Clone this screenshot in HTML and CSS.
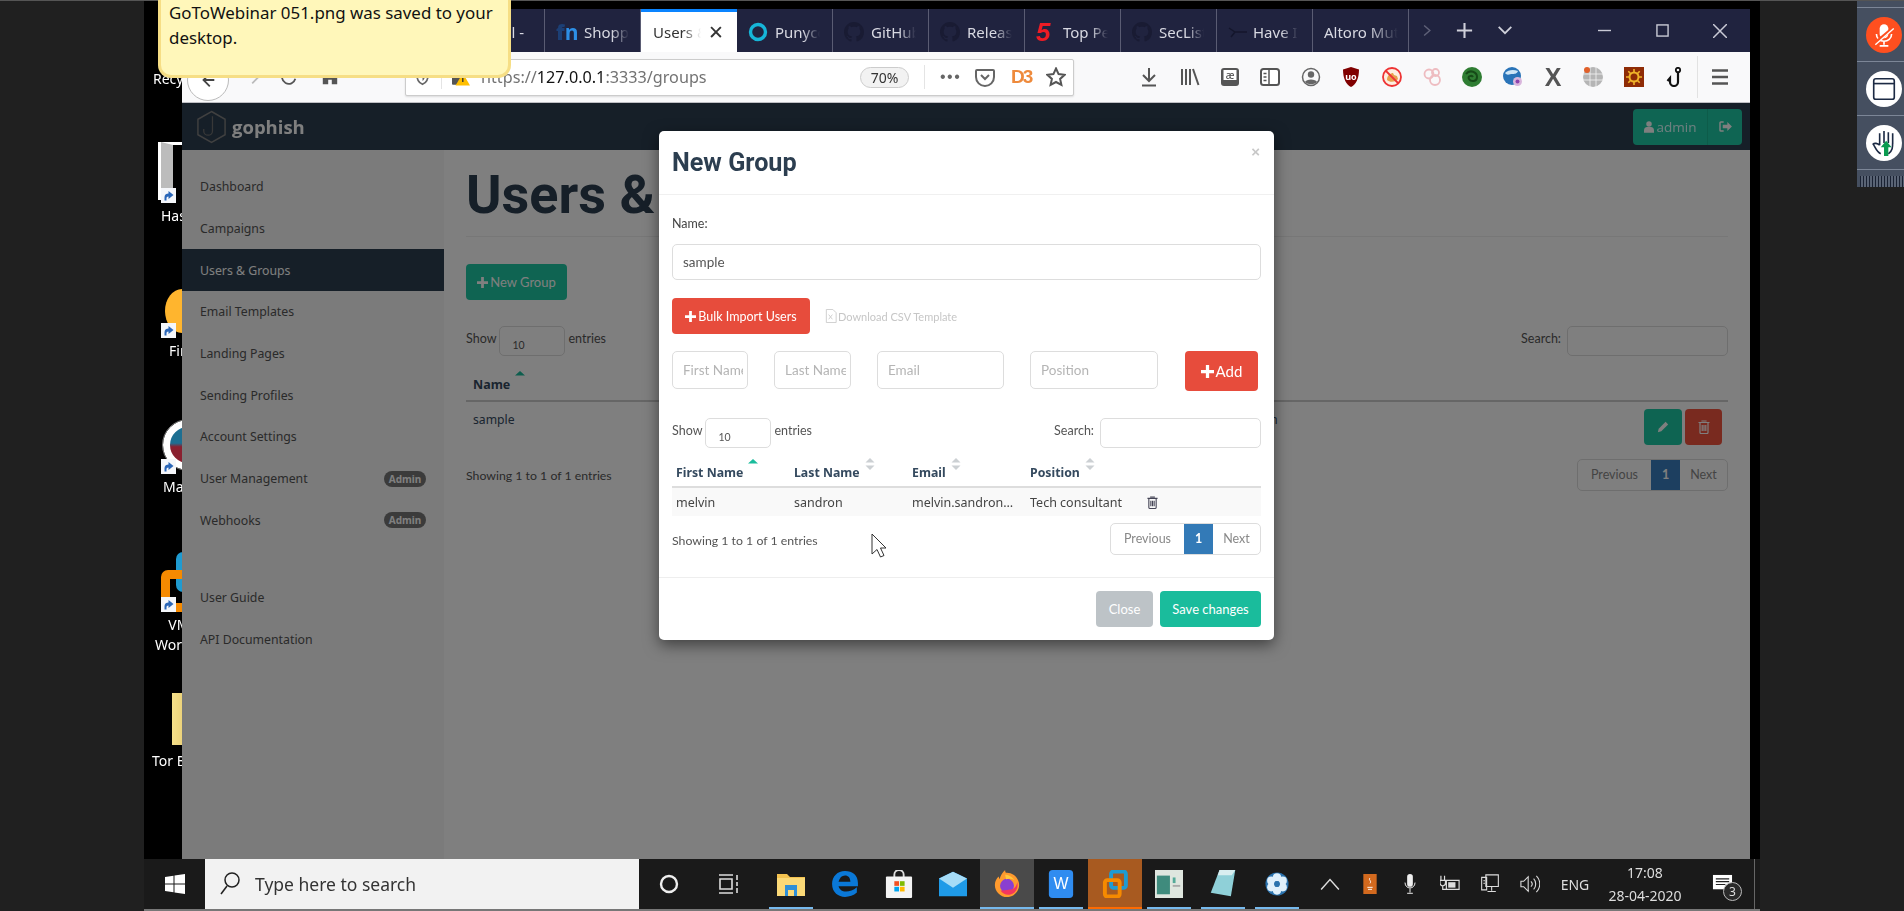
FILE: index.html
```html
<!DOCTYPE html>
<html lang="en">
<head>
<meta charset="utf-8">
<title>Users &amp; Groups - Gophish</title>
<link rel="stylesheet" href="styles.css">
</head>
<body>
<svg class="defs" width="0" height="0" aria-hidden="true">
  <symbol id="gh" viewBox="0 0 16 16"><path d="M8 0C3.58 0 0 3.58 0 8c0 3.54 2.29 6.53 5.47 7.59.4.07.55-.17.55-.38 0-.19-.01-.82-.01-1.49-2.01.37-2.53-.49-2.69-.94-.09-.23-.48-.94-.82-1.13-.28-.15-.68-.52-.01-.53.63-.01 1.08.58 1.23.82.72 1.21 1.87.87 2.33.66.07-.52.28-.87.51-1.07-1.78-.2-3.64-.89-3.64-3.95 0-.87.31-1.59.82-2.15-.08-.2-.36-1.02.08-2.12 0 0 .67-.21 2.2.82.64-.18 1.32-.27 2-.27.68 0 1.36.09 2 .27 1.53-1.04 2.2-.82 2.2-.82.44 1.1.16 1.92.08 2.12.51.56.82 1.27.82 2.15 0 3.07-1.87 3.75-3.65 3.95.29.25.54.73.54 1.48 0 1.07-.01 1.93-.01 2.2 0 .21.15.46.55.38A8.013 8.013 0 0016 8c0-4.42-3.58-8-8-8z"/></symbol>
  <symbol id="plus" viewBox="0 0 12 12"><path d="M4.5 0h3v4.5H12v3H7.5V12h-3V7.5H0v-3h4.5z"/></symbol>
  <symbol id="trash" viewBox="0 0 12 14"><path d="M4 1.500V1h4v.5M.5 2.500h11M2 3v9.500a1 1 0 0 0 1 1h6a1 1 0 0 0 1-1V3M4.200 5v6M6 5v6M7.800 5v6" fill="none" stroke="currentColor" stroke-width="1.200"/></symbol>
  <symbol id="sort" viewBox="0 0 10 12"><path d="M5 0l4.500 4.500H.5z" fill="#ccd0d3"/><path d="M5 12L.5 7.500h9z" fill="#ccd0d3"/></symbol>
  <symbol id="sortup" viewBox="0 0 10 12"><path d="M5 1l5 4.500H0z" fill="#1abc9c"/></symbol>
  <symbol id="sc" viewBox="0 0 15 15"><rect width="15" height="15" fill="#f4f6fa"/><path d="M3.500 12.500V9c0-2.500 2-3.500 4-3.500V3l5 4-5 4V8.500c-1.500 0-2 .8-2 2v2z" fill="#2a66b8"/></symbol>
</svg>

<div class="root">
  <div class="gutter-left"></div>

  <div class="screen">
    <div class="desk">
      <div class="desk-icon i-recycle"><span class="desk-label">Recycle</span></div>
      <div class="desk-icon i-hash"><span class="hash-art"></span><svg class="sc-badge"><use href="#sc"/></svg><span class="desk-label">Hashcat</span></div>
      <div class="desk-icon i-fire"><span class="fire-art"></span><svg class="sc-badge"><use href="#sc"/></svg><span class="desk-label">Firefox</span></div>
      <div class="desk-icon i-mal"><span class="mal-art"></span><svg class="sc-badge"><use href="#sc"/></svg><span class="desk-label">Maltego</span></div>
      <div class="desk-icon i-vm"><span class="vm-blue"></span><span class="vm-art"></span><svg class="sc-badge"><use href="#sc"/></svg><span class="desk-label">VMware<br>Workstation</span></div>
      <div class="desk-icon i-tor"><span class="tor-art"></span><span class="desk-label">Tor Browser</span></div>

      <div class="browser">
        <div class="tabs">
          <div class="tab first"><span class="tab-text">Gmail -</span></div>
          <div class="tab"><span class="fav-in"><b>f</b>n</span><span class="tab-text">Shopping</span></div>
          <div class="tab active"><span class="tab-text">Users &amp; Groups</span><span class="tab-x">✕</span></div>
          <div class="tab"><svg class="fav" viewBox="0 0 20 20"><circle cx="10" cy="10" r="7.500" fill="none" stroke="#16b5d8" stroke-width="3.400"/></svg><span class="tab-text">Punycode</span></div>
          <div class="tab"><svg class="fav gh"><use href="#gh"/></svg><span class="tab-text">GitHub</span></div>
          <div class="tab"><svg class="fav gh"><use href="#gh"/></svg><span class="tab-text">Releases</span></div>
          <div class="tab"><span class="fav-five">5</span><span class="tab-text">Top Pentest</span></div>
          <div class="tab"><svg class="fav gh"><use href="#gh"/></svg><span class="tab-text">SecLists</span></div>
          <div class="tab have"><svg class="fav" viewBox="0 0 20 20"><path d="M1 6l6 4h12M7 10l-4 5" fill="none" stroke="#14162c" stroke-width="1.500"/></svg><span class="tab-text">Have I Been</span></div>
          <div class="tab"><span class="tab-text wide">Altoro Mutual</span></div>
          <div class="tab-ctl more"><svg viewBox="0 0 14 20"><path d="M3 3l8 7-8 7" fill="none" stroke="#5f6178" stroke-width="2"/></svg></div>
          <div class="tab-ctl plus"><svg viewBox="0 0 20 20"><path d="M10 2v16M2 10h16" stroke="#cfd0da" stroke-width="2.200"/></svg></div>
          <div class="tab-ctl down"><svg viewBox="0 0 20 14"><path d="M3 3l7 7 7-7" fill="none" stroke="#cfd0da" stroke-width="2"/></svg></div>
          <div class="win-ctl min"><svg viewBox="0 0 14 14"><path d="M0 7h14" stroke="#c9cad6" stroke-width="1.500"/></svg></div>
          <div class="win-ctl max"><svg viewBox="0 0 14 14"><rect x="1" y="1" width="12" height="12" fill="none" stroke="#c9cad6" stroke-width="1.500"/></svg></div>
          <div class="win-ctl cls"><svg viewBox="0 0 14 14"><path d="M0 0l14 14M14 0L0 14" stroke="#c9cad6" stroke-width="1.500"/></svg></div>
        </div>

        <div class="toolbar">
          <div class="back"><svg viewBox="0 0 20 20"><path d="M12 3l-7 7 7 7M5 10h12" fill="none" stroke="#444" stroke-width="2"/></svg></div>
          <svg class="nav-ic fwd" viewBox="0 0 20 20"><path d="M8 3l7 7-7 7M15 10H3" fill="none" stroke="#bbb" stroke-width="2"/></svg>
          <svg class="nav-ic reload" viewBox="0 0 20 20"><path d="M16 6a7.500 7.500 0 1 0 1 6" fill="none" stroke="#555" stroke-width="2"/><path d="M17 2v6h-6z" fill="#555"/></svg>
          <svg class="nav-ic home" viewBox="0 0 20 20"><path d="M10 2L2 9v9h6v-5h4v5h6V9z" fill="#555"/></svg>
          <div class="urlbar">
            <svg class="url-ic" viewBox="0 0 20 20"><path d="M10 2l7 2c0 7-2 12-7 14C5 16 3 11 3 4z" fill="none" stroke="#666" stroke-width="2"/><path d="M10 6l3 1c0 3-1 6-3 7z" fill="#666"/></svg>
            <span class="url-sep"></span>
            <svg class="url-lock" viewBox="0 0 20 18"><rect x="0" y="6" width="11" height="11" rx="1" fill="#555"/><path d="M12 4l8 14H4z" fill="#ffbf00"/><path d="M12 9v5" stroke="#333" stroke-width="1.500"/></svg>
            <span class="url"><span class="dim">https://</span>127.0.0.1<span class="dim">:3333/groups</span></span>
            <span class="zoom-pill">70%</span>
            <span class="url-sep right"></span>
            <span class="dots">•••</span>
            <svg class="url-tool" viewBox="0 0 20 20"><path d="M2 3h16a1 1 0 0 1 1 1v6a9 9 0 0 1-18 0V4a1 1 0 0 1 1-1z" fill="none" stroke="#666" stroke-width="2"/><path d="M6 8l4 4 4-4" fill="none" stroke="#666" stroke-width="2"/></svg>
            <span class="d3">D3</span>
            <svg class="url-tool" viewBox="0 0 20 20"><path d="M10 1.500l2.600 5.600 6 .7-4.500 4.100 1.300 6L10 15l-5.400 2.900 1.300-6L1.400 7.800l6-.7z" fill="none" stroke="#555" stroke-width="2"/></svg>
          </div>
          <div class="tools">
            <div class="tool"><svg viewBox="0 0 20 20"><path d="M10 1v13M4 8l6 6 6-6M3 18.500h14" fill="none" stroke="#555" stroke-width="2"/></svg></div>
            <div class="tool"><svg viewBox="0 0 20 20"><path d="M2 2v16M6 2v16M10 2v16M13 2l5.500 16" fill="none" stroke="#555" stroke-width="2"/></svg></div>
            <div class="tool"><svg viewBox="0 0 20 20"><rect x="1" y="1" width="18" height="18" rx="3" fill="#555"/><rect x="3.500" y="3" width="13" height="10" fill="#fff"/><text x="10" y="11.500" text-anchor="middle" class="svg-ae">æ</text></svg></div>
            <div class="tool"><svg viewBox="0 0 20 20"><rect x="1" y="2" width="18" height="16" rx="2.500" fill="#fff" stroke="#555" stroke-width="2"/><path d="M9 2v16M3.500 6.500h3M3.500 10h3M3.500 13.500h3" stroke="#555" stroke-width="1.500"/></svg></div>
            <div class="tool"><svg viewBox="0 0 20 20"><circle cx="10" cy="10" r="8.500" fill="none" stroke="#666" stroke-width="1.500"/><circle cx="10" cy="7.500" r="3.200" fill="#666"/><path d="M4 15c1-3.500 11-3.500 12 0-3 3-9 3-12 0z" fill="#666"/></svg></div>
            <div class="tool"><svg viewBox="0 0 20 20"><path d="M10 0l8 2.500c0 9-3 15-8 17.500C5 17.500 2 11.500 2 2.500z" fill="#800000"/><text x="10" y="12.500" text-anchor="middle" class="svg-ub">uo</text></svg></div>
            <div class="tool"><svg viewBox="0 0 20 20"><circle cx="10" cy="10" r="9" fill="#fdeee0"/><path d="M5 13c0-5 4-7 6-7l1 2 3 1 1 3c-2 3-8 4-11 1z" fill="#e8a04c"/><circle cx="10" cy="10" r="9" fill="none" stroke="#e33" stroke-width="1.800"/><path d="M3.500 3.500l13 13" stroke="#e33" stroke-width="1.800"/></svg></div>
            <div class="tool"><svg viewBox="0 0 20 20"><g fill="none" stroke="#eebcc0" stroke-width="1.800"><circle cx="7" cy="7" r="4.500"/><circle cx="13.500" cy="5.500" r="3.500"/><circle cx="13" cy="13" r="5"/></g></svg></div>
            <div class="tool"><svg viewBox="0 0 20 20"><circle cx="10" cy="10" r="10" fill="#2f7d32"/><path d="M4 7c4-5 11-2 11 3s-6 5-8 2 3-4 4-2" fill="none" stroke="#164a18" stroke-width="2"/></svg></div>
            <div class="tool"><svg viewBox="0 0 20 20"><circle cx="9" cy="9" r="9" fill="#2a74b8"/><path d="M2 6c3-3 8-4 13-2-1 3-4 3-6 3S4 9 2 6z" fill="#cfe6f6"/><circle cx="14.500" cy="14.500" r="4.500" fill="#d9b6dc"/><circle cx="14.500" cy="14.500" r="2" fill="#8e44ad"/></svg></div>
            <div class="tool"><span class="x-logo">X</span></div>
            <div class="tool"><svg viewBox="0 0 20 20"><circle cx="10" cy="10" r="10" fill="#b5b5b5"/><path d="M0 7h20M0 13h20M7 0v20M13 0v20" stroke="#f5f5f5" stroke-width=".8"/><circle cx="4" cy="3" r="3" fill="#e0602a"/></svg></div>
            <div class="tool"><svg viewBox="0 0 20 20"><rect width="20" height="20" fill="#8f2c06"/><circle cx="10" cy="10" r="4.500" fill="none" stroke="#f0b429" stroke-width="2"/><path d="M10 2v3M10 15v3M2 10h3M15 10h3M4.300 4.300l2.200 2.200M13.500 13.500l2.200 2.200M15.700 4.300l-2.200 2.200M6.500 13.500l-2.200 2.200" stroke="#f0b429" stroke-width="1.600"/></svg></div>
            <div class="tool"><svg viewBox="0 0 20 20"><circle cx="14" cy="3" r="2.200" fill="none" stroke="#111" stroke-width="1.800"/><path d="M14 5v10a4 4 0 0 1-8 0v-4l-2.500 3" fill="none" stroke="#111" stroke-width="2.200"/></svg></div>
            <span class="tools-sep"></span>
            <div class="tool burger"><svg viewBox="0 0 20 20"><path d="M2 3.500h16M2 10h16M2 16.500h16" stroke="#555" stroke-width="2.400"/></svg></div>
          </div>
        </div>

        <div class="page">
          <header class="navbar">
            <svg class="logo" viewBox="0 0 32 34"><path d="M16 1l14 8v16l-14 8-14-8V9z" fill="none" stroke="#808080" stroke-width="1.500"/><path d="M17 6v15a4.500 4.500 0 0 1-9 0v-2" fill="none" stroke="#707070" stroke-width="1.300"/></svg>
            <span class="brand">gophish</span>
            <div class="user-btn"><span class="user-name"><svg class="u-ic" viewBox="0 0 12 14"><circle cx="6" cy="3.500" r="3.300"/><path d="M0 14v-3c0-3 2-4 3.500-4h5c1.500 0 3.500 1 3.500 4v3z"/></svg>admin</span><span class="user-out"><svg class="out-ic" viewBox="0 0 14 12"><path d="M5 1H2a1 1 0 0 0-1 1v8a1 1 0 0 0 1 1h3" fill="none" stroke="currentColor" stroke-width="1.600"/><path d="M4 4h5V1l5 5-5 5V8H4z"/></svg></span></div>
          </header>
          <div class="page-body">
            <nav class="sidebar">
              <a class="nav-item">Dashboard</a>
              <a class="nav-item">Campaigns</a>
              <a class="nav-item on">Users &amp; Groups</a>
              <a class="nav-item">Email Templates</a>
              <a class="nav-item">Landing Pages</a>
              <a class="nav-item">Sending Profiles</a>
              <a class="nav-item">Account Settings</a>
              <a class="nav-item">User Management<span class="pill">Admin</span></a>
              <a class="nav-item">Webhooks<span class="pill">Admin</span></a>
              <a class="nav-item docs">User Guide</a>
              <a class="nav-item">API Documentation</a>
            </nav>
            <main class="main">
              <h1 class="page-title">Users &amp; Groups</h1>
              <hr class="rule">
              <button class="btn btn-new"><svg class="btn-plus"><use href="#plus"/></svg>New Group</button>
              <div class="dt-top main-top">
                <div class="dt-len">Show<span class="len-box">10</span>entries</div>
                <div class="dt-search">Search:<span class="search-box"></span></div>
              </div>
              <table class="bg-table">
                <thead><tr><th class="c-name">Name<svg class="sort"><use href="#sortup"/></svg></th><th class="c-date">Modified Date</th><th></th></tr></thead>
                <tbody><tr><td>sample</td><td>April 28th 2020, 5:07:31 pm</td><td class="acts"><span class="act edit"><svg viewBox="0 0 14 14"><path d="M10 1l3 3-8 8-4 1 1-4z"/></svg></span><span class="act del"><svg><use href="#trash"/></svg></span></td></tr></tbody>
              </table>
              <div class="dt-foot">
                <span>Showing 1 to 1 of 1 entries</span>
                <div class="pager bg-pager"><span class="pg">Previous</span><span class="pg cur">1</span><span class="pg">Next</span></div>
              </div>
            </main>
          </div>
          <div class="backdrop"></div>

          <section class="modal">
            <div class="modal-head"><h2 class="modal-title">New Group</h2><span class="modal-x">×</span></div>
            <div class="modal-body">
              <label class="field-label">Name:</label>
              <div class="input name-input">sample</div>
              <div class="bulk-row">
                <button class="btn btn-red bulk"><svg class="btn-plus"><use href="#plus"/></svg>Bulk Import Users</button>
                <span class="csv"><svg class="csv-ic" viewBox="0 0 12 15"><path d="M1 .5h7l3.500 3.500v10.500H1z" fill="none" stroke="#ccc"/><path d="M3.500 6l4 5M7.500 6l-4 5" stroke="#ccc"/></svg>Download CSV Template</span>
              </div>
              <div class="user-row">
                <div class="input ph f1"><span>First Name</span></div>
                <div class="input ph f2"><span>Last Name</span></div>
                <div class="input ph f3"><span>Email</span></div>
                <div class="input ph f4"><span>Position</span></div>
                <button class="btn btn-red add"><svg class="btn-plus big"><use href="#plus"/></svg>Add</button>
              </div>
              <div class="dt-top">
                <div class="dt-len">Show<span class="len-box">10</span>entries</div>
                <div class="dt-search">Search:<span class="search-box s2"></span></div>
              </div>
              <table class="m-table">
                <thead><tr>
                  <th>First Name<svg class="sort"><use href="#sortup"/></svg></th>
                  <th>Last Name<svg class="sort"><use href="#sort"/></svg></th>
                  <th>Email<svg class="sort"><use href="#sort"/></svg></th>
                  <th>Position<svg class="sort"><use href="#sort"/></svg></th>
                  <th></th>
                </tr></thead>
                <tbody><tr><td>melvin</td><td>sandron</td><td>melvin.sandron@example.com</td><td>Tech consultant</td><td><svg class="m-trash"><use href="#trash"/></svg></td></tr></tbody>
              </table>
              <div class="dt-foot m-foot">
                <span class="foot-note">Showing 1 to 1 of 1 entries</span>
                <div class="pager"><span class="pg">Previous</span><span class="pg cur">1</span><span class="pg">Next</span></div>
              </div>
            </div>
            <div class="modal-foot">
              <button class="btn btn-close">Close</button>
              <button class="btn btn-save">Save changes</button>
            </div>
          </section>
          <svg class="pointer" viewBox="0 0 16 25"><path d="M1 1v20l5-4.500 3.500 7.500 3.500-1.500-3.500-7.500H15z" fill="#fff" stroke="#333" stroke-width="1"/></svg>
        </div>
      </div>

      <div class="toast">GoToWebinar 051.png was saved to your desktop.</div>
    </div>

    <footer class="taskbar">
      <div class="start"><svg viewBox="0 0 20 20"><path d="M0 3l8.500-1.200v7.700H0zM9.500 1.600L20 0v9.500H9.500zM0 10.500h8.500v7.700L0 17zM9.500 10.500H20V20L9.500 18.400z" fill="#fff"/></svg></div>
      <div class="searchbox"><svg viewBox="0 0 20 24"><circle cx="12" cy="8" r="7" fill="none" stroke="#222" stroke-width="1.500"/><path d="M7 14l-6 8" stroke="#222" stroke-width="1.500"/></svg><span>Type here to search</span></div>
      <div class="tb-sys"><svg viewBox="0 0 20 20"><circle cx="10" cy="10" r="8" fill="none" stroke="#eee" stroke-width="2.400"/></svg></div>
      <div class="tb-sys"><svg viewBox="0 0 20 20"><path d="M0 1h14M0 19h14M1 5h12v10H1zM18 1v5M18 8v4M18 14v5" fill="none" stroke="#ddd" stroke-width="1.600"/></svg></div>
      <div class="tb-apps">
        <div class="tb-item run"><svg viewBox="0 0 28 24"><path d="M0 2h10l3 3h15v19H0z" fill="#f4c24f"/><path d="M0 6h28v18H0z" fill="#fbd977"/><path d="M8 13h12v11h-3v-6h-6v6H8z" fill="#2e8fd8"/></svg></div>
        <div class="tb-item"><svg viewBox="0 0 26 26"><path d="M13 1C6 1 1 6 1 13c0 8 6 12 12 12 4 0 8-1 11-4v-5c-3 3-7 4-10 4-4 0-6-2-7-5h18v-3C25 5 20 1 13 1zM7 11c1-4 3-6 6-6s5 2 5 6z" fill="#0a78d7"/></svg></div>
        <div class="tb-item"><svg viewBox="0 0 28 30"><path d="M9 8V5a5 5 0 0 1 10 0v3" fill="none" stroke="#ddd" stroke-width="2"/><rect y="7" width="28" height="23" rx="1" fill="#f4f4f4"/><rect x="9" y="12" width="5" height="5" fill="#f25022"/><rect x="15" y="12" width="5" height="5" fill="#7fba00"/><rect x="9" y="18" width="5" height="5" fill="#00a4ef"/><rect x="15" y="18" width="5" height="5" fill="#ffb900"/></svg></div>
        <div class="tb-item"><svg viewBox="0 0 30 26"><path d="M0 7L15 0l15 7v19H0z" fill="#1f9be8"/><path d="M0 7l15 10L30 7 15 0z" fill="#a6dcf7"/></svg></div>
        <div class="tb-item hi"><svg viewBox="0 0 28 30"><path d="M14 3c7 0 13 6 13 13s-6 13-13 13S1 23 1 16c0-4 2-7 4-9l1 3c1-4 3-7 6-10 0 3 1 3 2 3z" fill="#ff9a2e"/><circle cx="14" cy="17" r="7.500" fill="#8a3fd0"/><path d="M7 22c3 5 10 6 15 2 3-3 4-7 3-11-1 5-4 8-8 8-4 1-7 1-10 1z" fill="#f4365e"/><path d="M12 5c3 0 8 2 10 6-3-2-6-2-9-1z" fill="#ffc93c"/></svg></div>
        <div class="tb-item run"><svg viewBox="0 0 26 30"><rect width="26" height="30" rx="4" fill="#2f8cf0"/><text x="13" y="20" text-anchor="middle" class="svg-wps">W</text></svg></div>
        <div class="tb-item vm"><svg viewBox="0 0 32 36"><rect x="11" y="2" width="19" height="21" rx="3" fill="none" stroke="#1f9bd1" stroke-width="5"/><rect x="3" y="13" width="19" height="21" rx="3" fill="none" stroke="#f68a00" stroke-width="5"/></svg></div>
        <div class="tb-item run"><svg viewBox="0 0 30 30"><rect width="30" height="30" fill="#dfe6df"/><rect x="2" y="6" width="14" height="20" fill="#3f8b7d"/><rect x="19" y="8" width="3" height="6" fill="#5a9"/><rect x="19" y="16" width="8" height="2" fill="#aaa"/></svg></div>
        <div class="tb-item run"><svg viewBox="0 0 28 32"><path d="M10 0h18l-5 30L0 26z" fill="#8fd0d8"/><path d="M10 0h18l-4 6H8z" fill="#d8eef0"/></svg></div>
        <div class="tb-item run"><svg viewBox="0 0 30 34"><circle cx="15" cy="17" r="14" fill="#2a72ad"/><g fill="#dff0fb"><circle cx="15" cy="9" r="5"/><circle cx="15" cy="25" r="5"/><circle cx="8" cy="13" r="5"/><circle cx="22" cy="13" r="5"/><circle cx="8" cy="21" r="5"/><circle cx="22" cy="21" r="5"/></g><circle cx="15" cy="17" r="3.500" fill="#2a72ad"/></svg></div>
      </div>
      <div class="tray">
        <div class="tray-i"><svg viewBox="0 0 18 12"><path d="M1 11l8-9 8 9" fill="none" stroke="#ddd" stroke-width="1.300"/></svg></div>
        <div class="tray-i"><svg viewBox="0 0 20 30"><rect width="20" height="30" fill="#d2691e"/><path d="M6 20h8M7 23h6M10 6c-3 3 3 4 0 8" fill="none" stroke="#fff" stroke-width="1.400"/></svg></div>
        <div class="tray-i"><svg viewBox="0 0 16 28"><rect x="4" y="0" width="8" height="18" rx="4" fill="#eee"/><path d="M1 12c0 10 14 10 14 0M8 20v6M4 27h8" fill="none" stroke="#eee" stroke-width="1.400"/></svg></div>
        <div class="tray-i"><svg viewBox="0 0 22 20"><path d="M7 6h14v10H7zM1 1v5M5 1v5M0 6h6v3a3 3 0 0 1-6 0zM3 12v4h4" fill="none" stroke="#ddd" stroke-width="1.300"/><rect x="9" y="8" width="8" height="6" fill="#ddd"/></svg></div>
        <div class="tray-i"><svg viewBox="0 0 22 24"><path d="M6 1h15v14H6zM1 4h6v15H1zM13 15v5M8 21h10M3 8h2M3 11h2" fill="none" stroke="#ddd" stroke-width="1.300"/></svg></div>
        <div class="tray-i"><svg viewBox="0 0 22 22"><path d="M1 8h3l5-5v16l-5-5H1zM12 8c2 2 2 4 0 6M15 5c3 3 3 9 0 12M18 2c5 5 5 13 0 18" fill="none" stroke="#ddd" stroke-width="1.200"/></svg></div>
        <div class="tray-lang">ENG</div>
        <div class="clock"><span>17:08</span><span>28-04-2020</span></div>
        <div class="notif"><svg viewBox="0 0 22 22"><path d="M1 1h20v15H1z" fill="#fff"/><path d="M4 5h14M4 8h14M4 11h10" stroke="#222" stroke-width="1.300"/></svg><span class="notif-n">3</span></div>
      </div>
      <div class="show-desktop"></div>
    </footer>
  </div>

  <div class="gutter-right">
    <aside class="gtw">
      <div class="gtw-cell stub"></div>
      <div class="gtw-cell"><span class="gtw-btn mic"><svg viewBox="0 0 24 24"><rect x="8" y="2" width="8" height="13" rx="4" fill="#fff"/><path d="M5 11c0 9 14 9 14 0M12 18v3M8 22h8" fill="none" stroke="#fff" stroke-width="1.500"/><path d="M3 20L21 5" stroke="#ff4f1f" stroke-width="3"/><path d="M4 21L21 6" stroke="#fff" stroke-width="1.300"/></svg></span></div>
      <div class="gtw-cell"><span class="gtw-btn"><svg viewBox="0 0 24 24"><rect x="2.500" y="2.500" width="19" height="19" rx="2" fill="none" stroke="#1c2a44" stroke-width="1.500"/><path d="M2.500 7h19" stroke="#1c2a44" stroke-width="1.500"/></svg></span></div>
      <div class="gtw-cell"><span class="gtw-btn"><svg viewBox="0 0 24 24"><path d="M8 14V3M12 12V1M16 12V2M20 13V3M8 14c-2-2-5-2-6-1 2 3 3 7 7 9M20 11c0 5 0 8-4 11" fill="none" stroke="#1c2a44" stroke-width="1.500"/><path d="M14 10l5 6h-3v8h-4v-8H9z" fill="#0a9b4f"/></svg></span></div>
      <div class="gtw-grip"></div>
    </aside>
  </div>
</div>
</body>
</html>
```

FILE: styles.css
```css
* { box-sizing: border-box; }
html, body { margin: 0; height: 100%; overflow: hidden; background: #202020; }
.defs { position: absolute; }
svg { display: block; }
.root { display: flex; width: 1904px; height: 911px; font-family: "Lato", "Liberation Sans", sans-serif; filter: blur(.35px); }
.gutter-left { width: 144px; background: #202020; border-top: 1px solid #555; }
.gutter-right { flex: 1; display: flex; justify-content: flex-end; align-items: flex-start; background: #202020; border-top: 1px solid #555; }
.screen { width: 1616px; display: flex; flex-direction: column; }
.desk { position: relative; flex: 1; background: #000; border-top: 1px solid #555; padding: 8px 10px 0 38px; }

/* Desktop icons sit behind the browser window */
.desk-icon { position: absolute; color: #fff; font: 14px/20px "Noto Sans", sans-serif; white-space: nowrap; }
.desk-icon span, .sc-badge { position: absolute; }
.desk-label { top: 0; left: 0; }
.sc-badge { width: 15px; height: 15px; }
.i-recycle { left: 9px; top: 68px; }
.i-hash { left: 17px; top: 141px; width: 30px; height: 90px; }
.hash-art { left: 0; top: 0; width: 30px; height: 58px; background: #000; border-top: 3px solid #fff; border-left: 12px solid #bcbcbc; box-shadow: -3px 0 0 #fff; }
.i-hash .sc-badge { left: 0; top: 46px; }
.i-hash .desk-label { left: 0; top: 64px; }
.i-fire { left: 21px; top: 288px; width: 30px; height: 74px; }
.fire-art { left: 0; top: 0; width: 34px; height: 44px; border-radius: 50%; background: linear-gradient(90deg, #ffb52e 60%, #ff5f3f); }
.i-fire .sc-badge { left: -4px; top: 34px; }
.i-fire .desk-label { left: 4px; top: 52px; }
.i-mal { left: 19px; top: 419px; width: 30px; height: 78px; }
.mal-art { left: 0; top: 0; width: 50px; height: 50px; border-radius: 50%; background: linear-gradient(180deg, #1d6f92 45%, #8a2030 55%); border: 7px solid #fff; outline: 1px solid #777; }
.i-mal .sc-badge { left: -2px; top: 39px; }
.i-mal .desk-label { left: 0; top: 57px; }
.i-vm { left: 17px; top: 551px; width: 30px; height: 104px; }
.vm-blue { left: 15px; top: 0; width: 16px; height: 40px; background: #1f9bd1; border-radius: 7px 0 0 7px; }
.vm-art { left: 0; top: 18px; width: 40px; height: 42px; border: 9px solid #f68a00; border-radius: 7px; }
.i-vm .sc-badge { left: 0; top: 45px; }
.i-vm .desk-label { left: -6px; top: 63px; text-align: center; }
.i-tor { left: 8px; top: 692px; width: 40px; height: 78px; }
.tor-art { left: 20px; top: 0; width: 30px; height: 52px; background: linear-gradient(90deg, #f5e08a, #d9b85c); }
.i-tor .desk-label { left: 0; top: 58px; }

/* Browser */
.browser { position: relative; z-index: 1; width: 1568px; height: 850px; display: flex; flex-direction: column; background: #fff; }
.tabs { height: 43px; background: #20233f; display: flex; align-items: stretch; padding-left: 267px; }
.tab { width: 96px; display: flex; align-items: center; gap: 7px; padding: 2px 0 0 11px; border-right: 1px solid #5a5c73; color: #d8d9e2; font: 15px "Noto Sans", sans-serif; flex: none; }
.tab.first { justify-content: flex-end; padding: 2px 20px 0 0; }
.tab.have { gap: 5px; }
.tab-text { flex: none; width: 45px; overflow: hidden; white-space: nowrap; -webkit-mask-image: linear-gradient(90deg, #000 62%, transparent); mask-image: linear-gradient(90deg, #000 62%, transparent); }
.tab.first .tab-text { width: auto; -webkit-mask-image: none; mask-image: none; }
.tab-text.wide { width: 74px; }
.tab.active { background: #fff; color: #333; border-right: 0; border-top: 3px solid #0a84ff; padding: 0 0 0 12px; }
.tab.active .tab-text { width: 48px; }
.tab-x { color: #333; font-size: 19px; margin-left: 0; }
.fav { width: 20px; height: 20px; flex: none; }
.fav.gh { fill: #191b33; }
.fav-in { flex: none; width: 21px; font: bold 21px/24px "Open Sans", sans-serif; color: #2d8fe6; }
.fav-in b { color: #1c3f75; }
.fav-five { flex: none; width: 20px; color: #ee1c25; font: italic bold 26px/26px "Liberation Sans", sans-serif; }
.tab-ctl, .win-ctl { display: flex; align-items: center; justify-content: center; flex: none; }
.tab-ctl.more { width: 36px; }
.tab-ctl.more svg { width: 10px; height: 15px; }
.tab-ctl.plus { width: 38px; }
.tab-ctl.plus svg { width: 19px; height: 19px; }
.tab-ctl.down { width: 44px; }
.tab-ctl.down svg { width: 18px; height: 13px; }
.win-ctl.min { margin-left: 48px; width: 58px; }
.win-ctl.max { width: 58px; }
.win-ctl.cls { width: 58px; }
.win-ctl svg { width: 13px; height: 13px; }
.win-ctl.cls svg { width: 14px; height: 14px; }

.toolbar { height: 51px; background: #f9f9fa; border-bottom: 1px solid #bfbfc4; display: flex; align-items: center; padding-left: 5px; flex: none; }
.back { width: 42px; height: 42px; border: 1px solid #bbb; border-radius: 50%; background: #fff; display: flex; align-items: center; justify-content: center; margin-top: 6px; flex: none; }
.back svg { width: 18px; height: 18px; }
.nav-ic { width: 18px; height: 18px; flex: none; }
.fwd { margin-left: 16px; }
.reload { margin-left: 17px; }
.home { margin-left: 23px; }
.urlbar { width: 669px; height: 37px; margin-left: 66px; background: #fff; border: 1px solid #ccc; border-radius: 2px; box-shadow: 0 1px 2px rgba(0,0,0,.12); display: flex; align-items: center; flex: none; }
.url-ic { width: 17px; height: 17px; margin-left: 8px; }
.url-sep { width: 1px; height: 24px; background: #e4e4e4; margin-left: 10px; }
.url-lock { width: 18px; height: 17px; margin-left: 10px; }
.url { margin-left: 11px; font: 16.200px "Noto Sans", sans-serif; color: #111; white-space: nowrap; width: 379px; }
.dim { color: #737373; }
.zoom-pill { width: 49px; height: 21px; border: 1px solid #ccc; border-radius: 11px; background: #f2f2f2; font: 14px/19px "Noto Sans", sans-serif; text-align: center; color: #333; flex: none; }
.url-sep.right { margin-left: 15px; }
.dots { margin-left: 15px; font: 16px "Liberation Sans", sans-serif; color: #666; letter-spacing: 1.500px; width: 21px; flex: none; white-space: nowrap; }
.url-tool { width: 20px; height: 20px; margin-left: 14px; flex: none; }
.d3 { margin-left: 16px; width: 20px; font: bold 19px/20px "Liberation Sans", sans-serif; letter-spacing: -2px; color: #ee8a3c; flex: none; }
.d3 + .url-tool { margin-left: 15px; }
.tools { display: flex; align-items: center; margin-left: 55px; }
.tool { width: 40.4px; display: flex; justify-content: center; flex: none; }
.tool svg { width: 20px; height: 20px; }
.svg-ae { font: 10px "Noto Sans", sans-serif; fill: #444; }
.svg-ub { font: bold 9px "Noto Sans", sans-serif; fill: #fff; }
.svg-wps { font: 17px "Liberation Sans", sans-serif; fill: #fff; }
.x-logo { font: bold 25px/24px "Liberation Sans", sans-serif; color: #555; }
.tools-sep { width: 1px; height: 42px; background: #e2e2e2; margin-left: 3px; }
.tool.burger { margin-left: 1px; }

/* Gophish page */
.page { position: relative; flex: 1; display: flex; flex-direction: column; min-height: 0; font-family: "Lato", sans-serif; color: #444; overflow: hidden; }
.navbar { height: 47px; background: #2c3e50; display: flex; align-items: center; padding: 0 8px 0 14px; flex: none; }
.logo { width: 31px; height: 34px; }
.brand { font: bold 18.500px/34px "Open Sans", sans-serif; color: #fff; margin-left: 5px; }
.user-btn { margin-left: auto; width: 109px; height: 36px; display: flex; background: #1ecba6; color: #dff; border-radius: 4px; font: 13.500px/36px "Open Sans", sans-serif; }
.user-name { width: 75px; display: flex; align-items: center; justify-content: center; gap: 3px; border-right: 1px solid #1ab894; }
.u-ic { width: 10px; height: 14px; fill: #fff; }
.user-out { flex: 1; display: flex; align-items: center; justify-content: center; }
.out-ic { width: 13px; height: 11px; fill: #fff; color: #fff; }
.page-body { flex: 1; display: flex; min-height: 0; }
.sidebar { width: 262px; background: #f6f6f6; padding-top: 16px; flex: none; }
.nav-item { display: flex; justify-content: space-between; align-items: center; height: 41.7px; padding: 0 18px 0 18px; font: 12.300px "Noto Sans", sans-serif; color: #555; }
.nav-item.on { background: #2c3e50; color: #fff; }
.nav-item.docs { margin-top: 35px; }
.nav-item.docs + .nav-item { margin-top: 1px; }
.pill { width: 42px; height: 16px; border-radius: 8px; background: #777; color: #fff; font: bold 10px/16px "Noto Sans", sans-serif; text-align: center; }
.main { flex: 1; padding: 15px 22px 0 22px; background: #fff; min-width: 0; }
.page-title { margin: 0; font: 700 54px/60px "Roboto", sans-serif; color: #2c3e50; white-space: nowrap; }
.rule { margin: 11px 0 27px; border: 0; border-top: 1px solid #eee; }
.btn { display: flex; align-items: center; justify-content: center; border: 0; border-radius: 4px; color: #fff; font: 13px "Lato", sans-serif; padding: 0; }
.btn-plus { width: 11px; height: 11px; fill: currentColor; margin-right: 2px; flex: none; }
.btn-plus.big { width: 13px; height: 13px; }
.btn-new { width: 101px; height: 36px; background: #1ec9a4; }
.dt-top { display: flex; justify-content: space-between; height: 30px; margin-top: 26px; font: 12.500px/26px "Lato", sans-serif; color: #555; }
.dt-len, .dt-search { display: flex; gap: 3px; }
.len-box { width: 66px; height: 30px; border: 1px solid #ddd; border-radius: 5px; font-size: 10.500px; line-height: 37px; padding-left: 12px; background: #fff; }
.search-box { width: 161px; height: 30px; border: 1px solid #ddd; border-radius: 5px; background: #fff; margin-left: 3px; }
.bg-table { width: 100%; border-collapse: collapse; table-layout: fixed; font: 12.200px "Noto Sans", sans-serif; color: #34495e; }
.bg-table th { height: 45px; border-bottom: 2px solid #ccc; text-align: left; padding: 7px 7px 0; font-size: 12.500px; white-space: nowrap; overflow: hidden; }
.c-name { width: 648px; }
.c-date { width: 165px; }
.bg-table td { padding: 0 7px 15px; white-space: nowrap; height: 50px; overflow: hidden; }
.bg-table .acts { padding: 7px 6px 7px 0; }
.acts { display: flex; justify-content: flex-end; gap: 3px; }
.act { width: 38px; height: 36px; border-radius: 4px; display: flex; align-items: center; justify-content: center; color: #fff; fill: #fff; }
.act.edit { background: #1dc9a4; }
.act.del { width: 37px; background: #f2543f; }
.act svg { width: 12px; height: 14px; }
.sort { display: inline-block; width: 10px; height: 12px; margin-left: 5px; vertical-align: 7px; }
.dt-foot { display: flex; justify-content: space-between; align-items: center; margin-top: 7px; font: 12.300px "Lato", sans-serif; color: #555; }
.foot-note { padding-top: 2px; }
.pager { width: 151px; height: 32px; display: flex; border: 1px solid #ddd; border-radius: 5px; background: #fff; font: 12.500px/30px "Lato", sans-serif; color: #888; overflow: hidden; }
.pg { flex: none; width: 47px; text-align: center; }
.pg:first-child { width: 73px; }
.pg.cur { width: 29px; background: #337ab7; color: #fff; font-weight: 700; }
.bg-pager .cur { background: #3a7fc0; }

.backdrop { position: absolute; inset: 0; background: rgba(0,0,0,.5); }

.modal { position: absolute; left: 477px; top: 28px; width: 615px; height: 509px; background: #fff; border-radius: 5px; box-shadow: 0 5px 15px rgba(0,0,0,.5); display: flex; flex-direction: column; color: #444; }
.modal-head { height: 64px; flex: none; border-bottom: 1px solid #f0f0f0; padding: 0 13px; display: flex; justify-content: space-between; }
.modal-title { margin: 12px 0 0; font: 700 25.200px/40px "Roboto", sans-serif; color: #2c3e50; }
.modal-x { font: bold 15px/20px "Liberation Sans", sans-serif; color: #c8c8c8; margin-top: 11px; margin-right: 1px; }
.modal-body { flex: 1; padding: 20px 13px 0 13px; }
.field-label { display: block; font: 12.500px/17px "Lato", sans-serif; color: #444; margin-bottom: 12px; }
.input { height: 36px; border: 1px solid #ddd; border-radius: 5px; background: #fff; font: 13.500px/34px "Lato", sans-serif; color: #555; padding-left: 10px; white-space: nowrap; overflow: hidden; flex: none; }
.bulk-row { display: flex; align-items: center; margin-top: 18px; }
.btn-red { background: #e74c3c; }
.bulk { width: 138px; height: 36px; font-size: 12.500px; }
.csv { display: flex; align-items: center; margin-left: 15px; font: 11px "Lato", sans-serif; color: #c6c6c6; }
.csv-ic { width: 12px; height: 14px; margin-right: 1px; }
.user-row { display: flex; align-items: flex-start; margin-top: 17px; }
.ph { height: 38px; line-height: 36px; color: #b5b5b5; padding: 0 4px 0 10px; }
.ph span { display: block; overflow: hidden; }
.f1 { width: 76px; }
.f2 { width: 77px; margin-left: 26px; }
.f3 { width: 127px; margin-left: 26px; }
.f4 { width: 128px; margin-left: 26px; }
.add { width: 73px; height: 40px; margin-left: 27px; font-size: 15px; }
.modal-body .dt-top { margin-top: 27px; }
.m-table { width: 100%; border-collapse: collapse; table-layout: fixed; font: 12.500px "Noto Sans", sans-serif; color: #444; }
.m-table th { height: 39px; padding: 5px 4px 0; text-align: left; border-bottom: 2px solid #ddd; color: #34495e; white-space: nowrap; width: 118px; font-size: 12.300px; }
.m-table th:nth-child(4) { width: 117px; }
.m-table th:last-child { width: auto; }
.m-table td { height: 29px; padding: 0 9px 0 4px; background: #f9f9f9; white-space: nowrap; overflow: hidden; text-overflow: ellipsis; }
.m-trash { width: 11px; height: 13px; color: #445; }
.m-foot { margin-top: 7px; }
.modal-foot { height: 63px; flex: none; border-top: 1px solid #eee; display: flex; justify-content: flex-end; gap: 7px; padding: 13px 13px 0 0; }
.btn-close { width: 57px; height: 36px; background: #bdc3c7; }
.btn-save { width: 101px; height: 36px; background: #1abc9c; }
.pointer { position: absolute; left: 689px; top: 430px; width: 16px; height: 25px; }

/* Screenshot toast */
.toast { position: absolute; z-index: 2; left: 14px; top: -1px; width: 353px; height: 78px; padding: 0 9px 0 8px; background: #fff7ba; border: 3px solid #f6de85; border-top: 0; border-radius: 0 0 13px 13px; font: 16.900px/25px "Noto Sans", sans-serif; color: #111; }

/* Windows taskbar */
.taskbar { height: 52px; flex: none; background: #1a1a1a; border-bottom: 2px solid #777; display: flex; align-items: stretch; }
.start { width: 61px; display: flex; align-items: center; justify-content: center; }
.start svg { width: 20px; height: 20px; }
.searchbox { width: 434px; background: #f2f2f2; display: flex; align-items: center; padding-left: 15px; font: 17.500px "Noto Sans", sans-serif; color: #333; gap: 15px; }
.searchbox svg { width: 20px; height: 24px; }
.tb-sys { width: 60px; display: flex; align-items: center; justify-content: center; }
.tb-sys svg { width: 20px; height: 20px; }
.tb-apps { display: flex; margin-left: 5px; }
.tb-item { position: relative; width: 54px; display: flex; align-items: center; justify-content: center; }
.tb-item svg { width: 28px; height: 28px; }
.tb-item.run::after, .tb-item.vm::after { content: ""; position: absolute; left: 5px; right: 5px; bottom: 0; height: 2px; background: #76b9ed; }
.tb-item.hi { background: #4a4a4a; }
.tb-item.hi::after { content: ""; position: absolute; left: 0; right: 0; bottom: 0; height: 2px; background: #76b9ed; }
.tb-item.vm { background: #a85a20; }
.tb-item.vm::after { left: 0; right: 0; background: #ff6a00; }
.tray { margin-left: auto; display: flex; align-items: center; color: #ddd; }
.tray-i { width: 40px; display: flex; justify-content: center; }
.tray-i svg { width: 20px; height: 20px; }
.tray-lang { width: 50px; text-align: center; font: 14px "Noto Sans", sans-serif; }
.clock { width: 90px; display: flex; flex-direction: column; align-items: center; font: 14px/23px "Noto Sans", sans-serif; }
.notif { position: relative; width: 64px; height: 100%; display: flex; align-items: center; justify-content: center; }
.notif svg { width: 21px; height: 21px; }
.notif-n { position: absolute; left: 33px; top: 23px; width: 19px; height: 19px; border: 1px solid #bbb; border-radius: 50%; background: #2a2a2a; font: 12px/17px "Noto Sans", sans-serif; text-align: center; }
.show-desktop { width: 6px; border-left: 1px solid #666; }

/* GoToWebinar panel */
.gtw { width: 47px; height: 186px; background: #454f60; display: flex; flex-direction: column; }
.gtw-cell { height: 54px; border-bottom: 1px solid #7c8697; display: flex; align-items: center; justify-content: flex-start; padding-left: 9px; flex: none; }
.gtw-cell.stub { height: 7px; padding: 0; }
.gtw-btn { width: 36px; height: 36px; border-radius: 50%; background: #fff; display: flex; align-items: center; justify-content: center; flex: none; }
.gtw-btn svg { width: 26px; height: 26px; }
.gtw-btn.mic { background: #ff4f1f; }
.gtw-grip { height: 15px; margin: 6px 0 0 3px; background: repeating-linear-gradient(90deg, #1a2233 0 1.500px, #5a6475 1.500px 3px); }
```
